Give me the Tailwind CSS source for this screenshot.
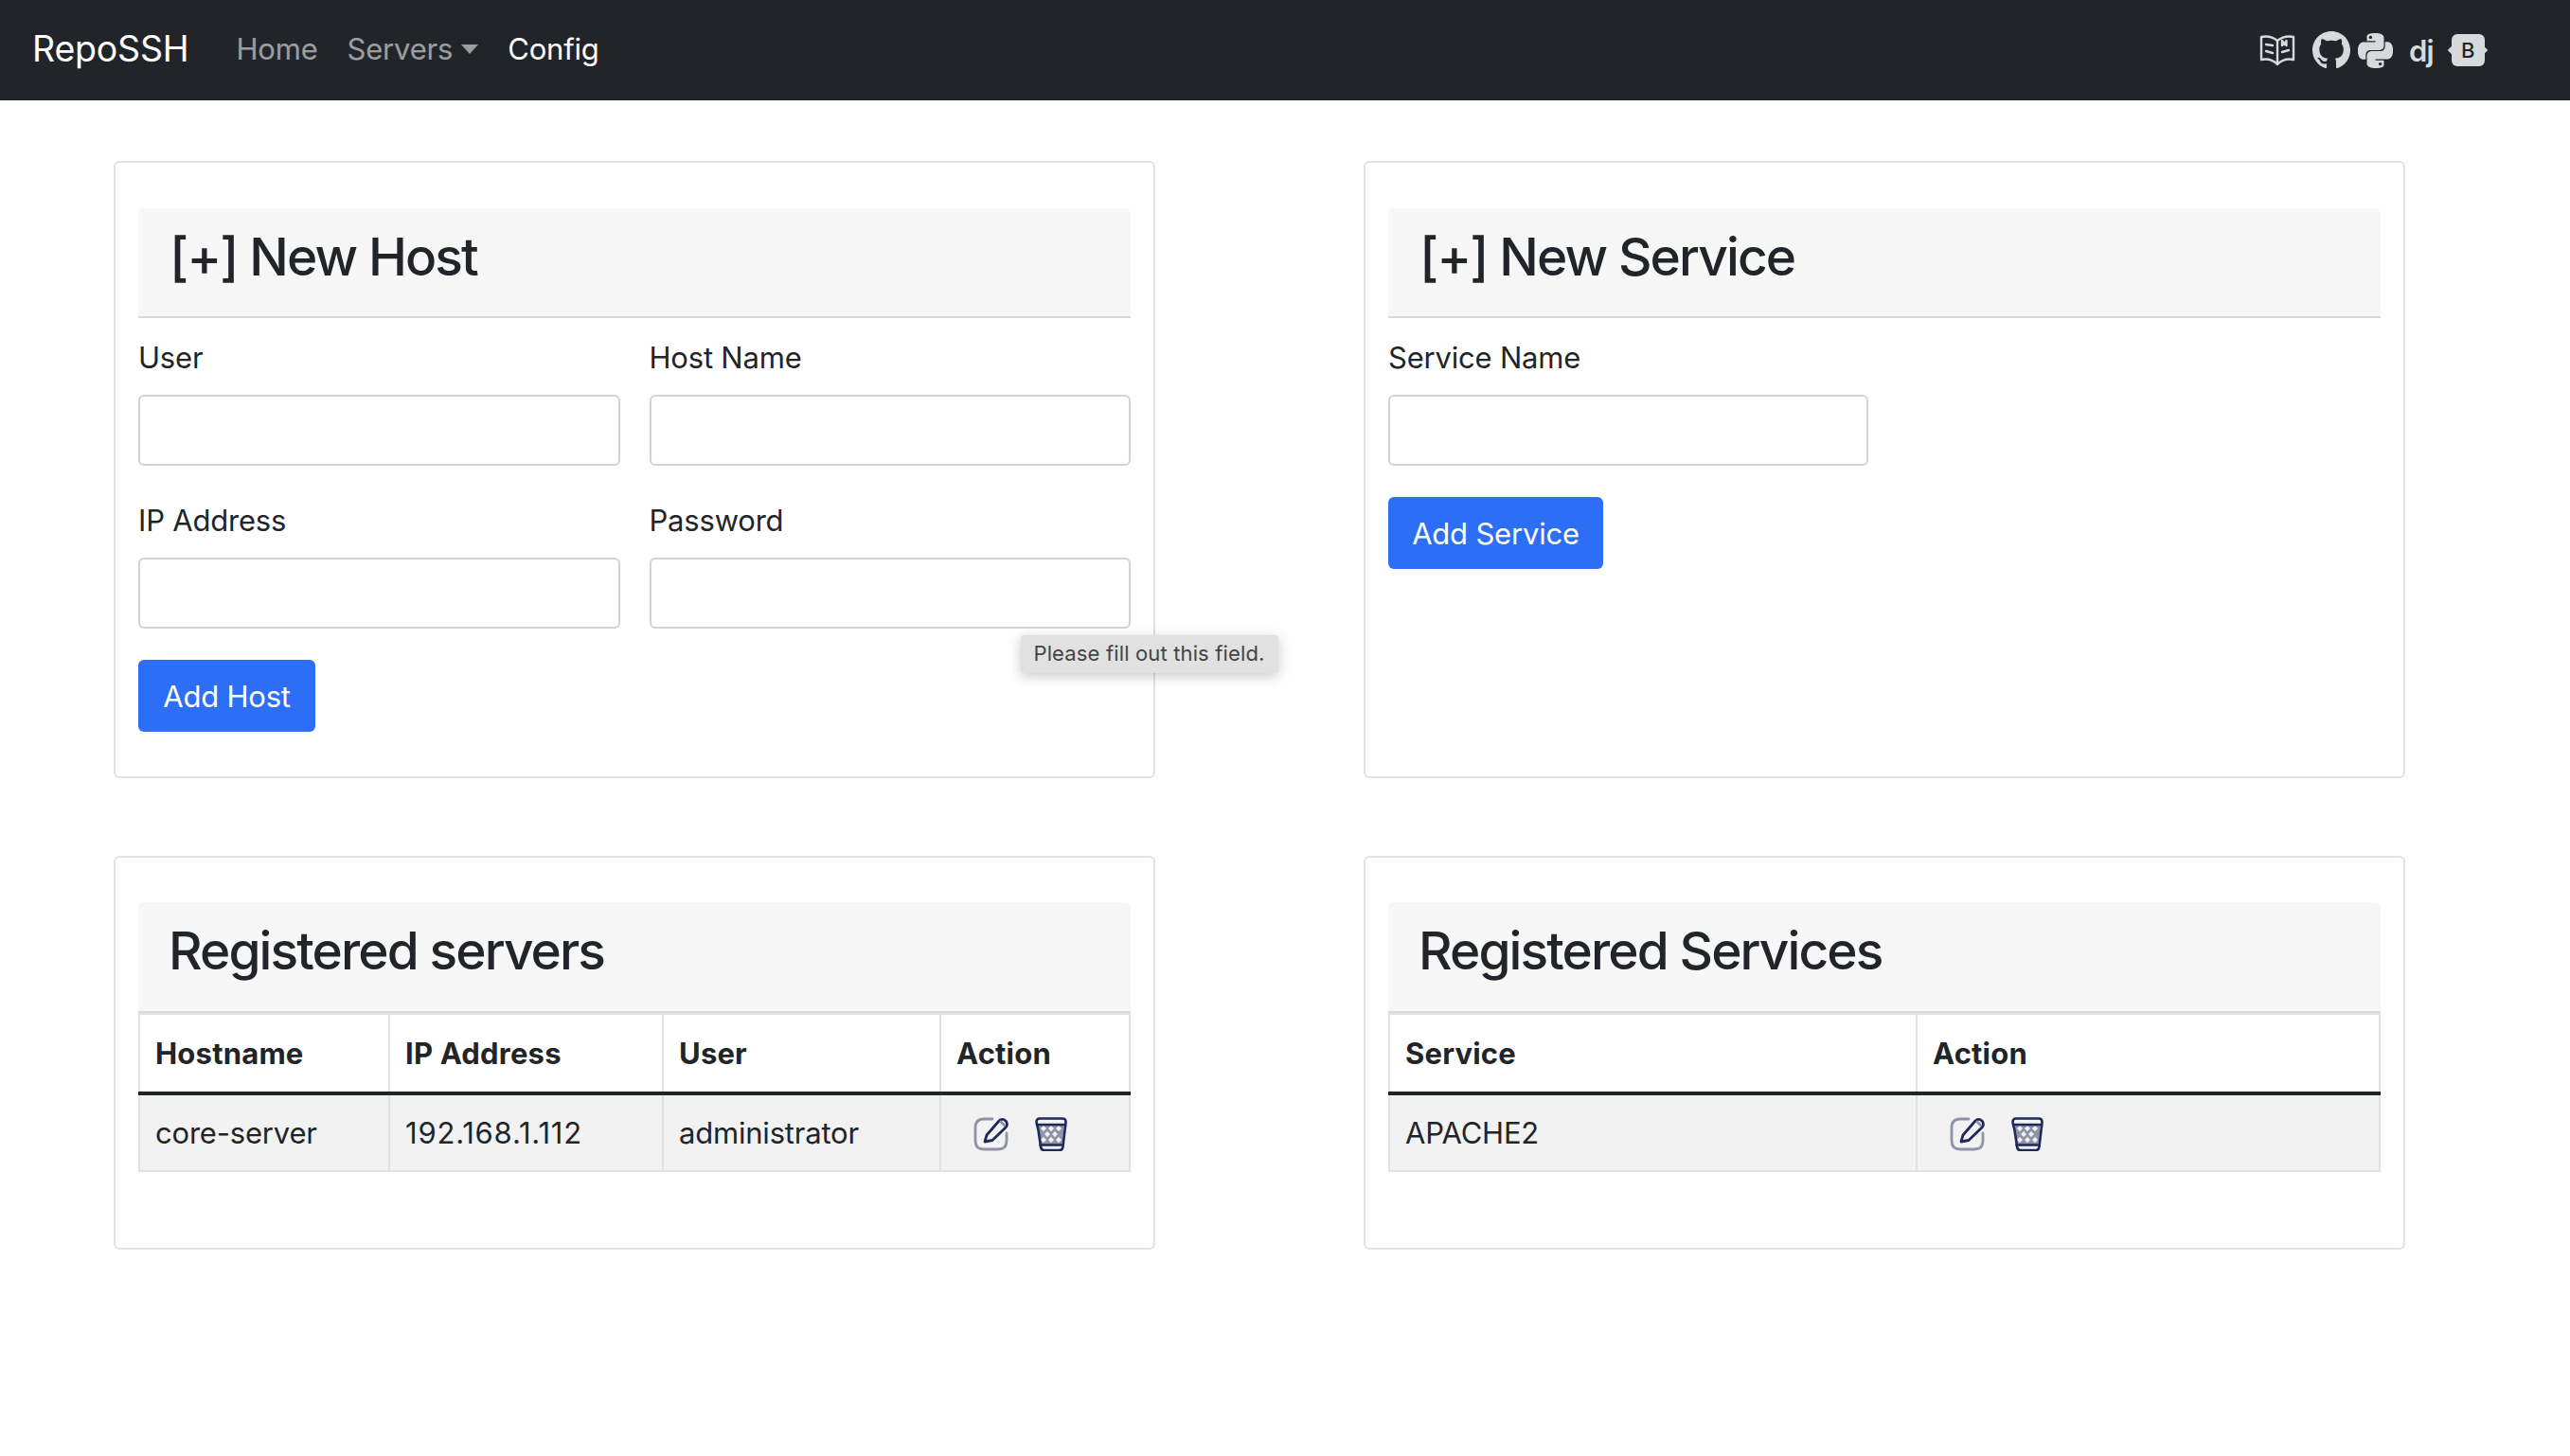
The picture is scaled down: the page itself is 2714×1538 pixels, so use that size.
<!DOCTYPE html>
<html lang="en">
  <head>
    <meta charset="UTF-8" />
    <title>RepoSSH</title>
    <script src="https://cdn.jsdelivr.net/npm/@tailwindcss/browser@4"></script>
  </head>
  <body class="bg-white text-[#212529] font-['Inter',sans-serif] text-[31px] tracking-[-0.2px] leading-[41px] overflow-hidden h-[1538px]">

    <!-- Navbar -->
    <nav class="h-[106px] bg-[#212529] flex items-center pl-[34px] pr-[88px]">
      <a class="text-white text-[37.5px] mr-[50px] -mt-[3px]">RepoSSH</a>
      <a class="text-white/55 mr-[31px] -mt-[4px]">Home</a>
      <a class="text-white/55 mr-[31px] -mt-[4px] flex items-center">Servers<span class="ml-[9px] mt-[2px] border-x-[9px] border-x-transparent border-t-[10px] border-t-white/55"></span></a>
      <a class="text-white -mt-[4px]">Config</a>
      <div class="ml-auto flex items-center text-[#d7dadc]">
        <svg class="w-[38px] h-[34px] -ml-[2px]" viewBox="0 0 38 34" fill="none" stroke="currentColor" stroke-width="2.4" stroke-linejoin="round" stroke-linecap="round">
          <path d="M19 7C14 3 7 2 2 3v24c5-1 12 0 17 5 5-5 12-6 17-5V3c-5-1-12 0-17 4zM19 7v25" />
          <path d="M7 11l7 1M7 18l7 2M24 19l7-2M24 12v-5l2.500 4 2-4 0 5" />
        </svg>
        <svg class="w-[40px] h-[40px] ml-[18px]" viewBox="0 0 16 16" fill="currentColor">
          <path d="M8 0C3.58 0 0 3.58 0 8c0 3.54 2.29 6.53 5.47 7.59.4.07.55-.17.55-.38 0-.19-.01-.82-.01-1.49-2.01.37-2.53-.49-2.69-.94-.09-.23-.48-.94-.82-1.13-.28-.15-.68-.52-.01-.53.63-.01 1.08.58 1.23.82.72 1.21 1.87.87 2.33.66.07-.52.28-.87.51-1.07-1.78-.2-3.64-.89-3.64-3.95 0-.87.31-1.59.82-2.15-.08-.2-.36-1.02.08-2.12 0 0 .67-.21 2.2.82.64-.18 1.32-.27 2-.27.68 0 1.36.09 2 .27 1.53-1.04 2.2-.82 2.2-.82.44 1.1.16 1.92.08 2.12.51.56.82 1.27.82 2.15 0 3.07-1.87 3.75-3.65 3.95.29.25.54.73.54 1.48 0 1.07-.01 1.93-.01 2.2 0 .21.15.46.55.38A8.012 8.012 0 0 0 16 8c0-4.42-3.58-8-8-8z" />
        </svg>
        <svg class="w-[37px] h-[37px] ml-[8px]" viewBox="0 0 24 24" fill="currentColor">
          <path d="M14.25.18l.9.2.73.26.59.3.45.32.34.34.25.34.16.33.1.3.04.26.02.2-.01.13V8.500l-.05.63-.13.55-.21.46-.26.38-.3.31-.33.25-.35.19-.35.14-.33.1-.3.07-.26.04-.21.02H8.770l-.69.05-.59.14-.5.22-.41.27-.33.32-.27.35-.2.36-.15.37-.1.35-.07.32-.04.27-.02.21v3.060H3.170l-.21-.03-.28-.07-.32-.12-.35-.18-.36-.26-.36-.36-.35-.46-.32-.59-.28-.73-.21-.88-.14-1.05-.05-1.23.06-1.22.16-1.04.24-.87.32-.71.36-.57.4-.44.42-.33.42-.24.4-.16.36-.1.32-.05.24-.01h.16l.06.01h8.160v-.83H6.180l-.01-2.75-.02-.37.05-.34.11-.31.17-.28.25-.26.31-.23.38-.2.44-.18.51-.15.58-.12.64-.1.71-.06.77-.04.84-.02 1.27.05zm-6.3 1.98l-.23.33-.08.41.08.41.23.34.33.22.41.09.41-.09.33-.22.23-.34.08-.41-.08-.41-.23-.33-.33-.22-.41-.09-.41.09zm13.09 3.95l.28.06.32.12.35.18.36.27.36.35.35.47.32.59.28.73.21.88.14 1.04.05 1.23-.06 1.23-.16 1.04-.24.86-.32.71-.36.57-.4.45-.42.33-.42.24-.4.16-.36.09-.32.05-.24.02-.16-.01h-8.220v.82h5.840l.01 2.76.02.36-.05.34-.11.31-.17.29-.25.25-.31.24-.38.2-.44.17-.51.15-.58.13-.64.09-.71.07-.77.04-.84.01-1.27-.04-1.07-.14-.9-.2-.73-.25-.59-.3-.45-.33-.34-.34-.25-.34-.16-.33-.1-.3-.04-.25-.02-.2.01-.13v-5.340l.05-.64.13-.54.21-.46.26-.38.3-.32.33-.24.35-.2.35-.14.33-.1.3-.06.26-.04.21-.02.13-.01h5.840l.69-.05.59-.14.5-.21.41-.28.33-.32.27-.35.2-.36.15-.36.1-.35.07-.32.04-.28.02-.21V6.070h2.090l.14.01zm-6.47 14.25l-.23.33-.08.41.08.41.23.33.33.23.41.08.41-.08.33-.23.23-.33.08-.41-.08-.41-.23-.33-.33-.23-.41-.08-.41.08z" />
        </svg>
        <span class="ml-[17px] w-[26px] text-[31px] font-semibold leading-none tracking-tight">dj</span>
        <div class="ml-[16px] relative w-[40px] h-[34px] flex items-center justify-center">
          <span class="absolute left-0 top-[14px] w-[6px] h-[6px] bg-[#d7dadc] rotate-45"></span>
          <span class="absolute right-0 top-[14px] w-[6px] h-[6px] bg-[#d7dadc] rotate-45"></span>
          <span class="relative w-[35px] h-[34px] rounded-[6px] bg-[#d7dadc] text-[#212529] text-[22px] font-medium leading-none flex items-center justify-center">B</span>
        </div>
      </div>
    </nav>

    <!-- Cards -->
    <main class="grid grid-cols-[1100px_1100px] gap-x-[220px] gap-y-[82px] pl-[120px] pt-[64px]">

      <section class="h-[652px] border-2 border-[#dfe2e6] rounded-[6px] px-[24px] pt-[48px]">
        <h2 class="h-[116px] bg-[#f7f7f7] border-b-2 border-[#d9d9d9] rounded-t-[6px] pl-[33px] text-[55px] font-medium leading-[102px] tracking-[-1.9px]">[+] New Host</h2>
        <div class="grid grid-cols-2 gap-x-[31px] gap-y-[33px] mt-[21px]">
          <div>
            <label class="block h-[60px]">User</label>
            <input class="block w-full h-[75px] bg-white border-2 border-[#ced4da] rounded-[6px]" />
          </div>
          <div>
            <label class="block h-[60px]">Host Name</label>
            <input class="block w-full h-[75px] bg-white border-2 border-[#ced4da] rounded-[6px]" />
          </div>
          <div>
            <label class="block h-[64px] pt-[4px]">IP Address</label>
            <input class="block w-full h-[75px] bg-white border-2 border-[#ced4da] rounded-[6px]" />
          </div>
          <div class="relative">
            <label class="block h-[64px] pt-[4px]">Password</label>
            <input class="block w-full h-[75px] bg-white border-2 border-[#ced4da] rounded-[6px]" />
            <div class="absolute left-[392px] top-[146px] z-10 w-[272px] h-[40px] bg-[#e1e1e1] rounded-[3px] text-[#444] text-[22px] tracking-[0.15px] leading-[38px] text-center whitespace-nowrap shadow-[0_3px_14px_rgba(0,0,0,0.22)]">Please fill out this field.</div>
          </div>
        </div>
        <button class="block mt-[33px] w-[187px] h-[76px] bg-[#2c6ef6] text-white rounded-[6px]">Add Host</button>
      </section>

      <section class="h-[652px] border-2 border-[#dfe2e6] rounded-[6px] px-[24px] pt-[48px]">
        <h2 class="h-[116px] bg-[#f7f7f7] border-b-2 border-[#d9d9d9] rounded-t-[6px] pl-[33px] text-[55px] font-medium leading-[102px] tracking-[-1.9px]">[+] New Service</h2>
        <div class="mt-[21px] w-[507px]">
          <label class="block h-[60px]">Service Name</label>
          <input class="block w-full h-[75px] bg-white border-2 border-[#ced4da] rounded-[6px]" />
        </div>
        <button class="block mt-[33px] w-[227px] h-[76px] bg-[#2c6ef6] text-white rounded-[6px]">Add Service</button>
      </section>

      <section class="h-[416px] border-2 border-[#dfe2e6] rounded-[6px] px-[24px] pt-[47px]">
        <h2 class="h-[117px] bg-[#f7f7f7] border-b-2 border-[#d9d9d9] rounded-t-[6px] pl-[32px] text-[55px] font-medium leading-[102px] tracking-[-1.9px]">Registered servers</h2>
        <table class="w-full table-fixed border-collapse">
          <thead>
            <tr class="h-[84px] text-left">
              <th class="w-[264px] pl-[16px] border-2 border-[#dee2e6] border-b-[4px] border-b-[#212529] font-bold tracking-[0.2px]">Hostname</th>
              <th class="w-[289px] pl-[16px] border-2 border-[#dee2e6] border-b-[4px] border-b-[#212529] font-bold tracking-[0.2px]">IP Address</th>
              <th class="w-[293px] pl-[16px] border-2 border-[#dee2e6] border-b-[4px] border-b-[#212529] font-bold tracking-[0.2px]">User</th>
              <th class="pl-[16px] border-2 border-[#dee2e6] border-b-[4px] border-b-[#212529] font-bold tracking-[0.2px]">Action</th>
            </tr>
          </thead>
          <tbody>
            <tr class="h-[82px] bg-[#f2f2f2]">
              <td class="pl-[16px] border-2 border-t-0 border-[#dee2e6]">core-server</td>
              <td class="pl-[16px] border-2 border-t-0 border-[#dee2e6] tracking-[0.8px]">192.168.1.112</td>
              <td class="pl-[16px] border-2 border-t-0 border-[#dee2e6]">administrator</td>
              <td class="pl-[34px] border-2 border-t-0 border-[#dee2e6]">
                <div class="flex items-center gap-[28px] pt-[3px]">
                  <svg class="w-[37px] h-[36px]" viewBox="0 0 37 36" fill="none" stroke-linecap="round" stroke-linejoin="round">
                    <path d="M20 2H11C5 2 2 5 2 11v14c0 6 3 9 9 9h15c6 0 9-3 9-9V17" stroke="#8e93a8" stroke-width="2.800" />
                    <path d="M12 26l2-7L27 4c2-2 5-2 7 0s2 5 0 7L20 24.500z" stroke="#1e2a5a" stroke-width="2.800" />
                    <path d="M29 5l3.500 3.500" stroke="#8e93a8" stroke-width="2.800" />
                  </svg>
                  <svg class="w-[34px] h-[36px]" viewBox="0 0 34 36" fill="none" stroke-linecap="round" stroke-linejoin="round">
                    <path d="M3 8h28l-2.500 21h-23z" fill="#8f93a6" />
                    <path d="M9 9l3 3-3 3-3-3zM17 9l3 3-3 3-3-3zM25 9l3 3-3 3-3-3zM13 15l3 3-3 3-3-3zM21 15l3 3-3 3-3-3zM9 21l3 3-3 3-3-3zM17 21l3 3-3 3-3-3zM25 21l3 3-3 3-3-3z" fill="#f2f2f2" />
                    <path d="M5 1.500h24c2.500 0 3.500 1.500 3.500 3.500 0 2-.5 6-1 9l-2 17c-.3 3-2 4-4 4H10c-2 0-3.700-1-4-4L3.500 14c-.5-3-2-7-2-9s1-3.500 3.500-3.500z" stroke="#1e2a5a" stroke-width="2.600" />
                    <path d="M2.500 8h29M5.500 29.500h23" stroke="#1e2a5a" stroke-width="2.600" />
                  </svg>
                </div>
              </td>
            </tr>
          </tbody>
        </table>
      </section>

      <section class="h-[416px] border-2 border-[#dfe2e6] rounded-[6px] px-[24px] pt-[47px]">
        <h2 class="h-[117px] bg-[#f7f7f7] border-b-2 border-[#d9d9d9] rounded-t-[6px] pl-[32px] text-[55px] font-medium leading-[102px] tracking-[-1.9px]">Registered Services</h2>
        <table class="w-full table-fixed border-collapse">
          <thead>
            <tr class="h-[84px] text-left">
              <th class="w-[557px] pl-[16px] border-2 border-[#dee2e6] border-b-[4px] border-b-[#212529] font-bold tracking-[0.2px]">Service</th>
              <th class="pl-[16px] border-2 border-[#dee2e6] border-b-[4px] border-b-[#212529] font-bold tracking-[0.2px]">Action</th>
            </tr>
          </thead>
          <tbody>
            <tr class="h-[82px] bg-[#f2f2f2]">
              <td class="pl-[16px] border-2 border-t-0 border-[#dee2e6]">APACHE2</td>
              <td class="pl-[34px] border-2 border-t-0 border-[#dee2e6]">
                <div class="flex items-center gap-[28px] pt-[3px]">
                  <svg class="w-[37px] h-[36px]" viewBox="0 0 37 36" fill="none" stroke-linecap="round" stroke-linejoin="round">
                    <path d="M20 2H11C5 2 2 5 2 11v14c0 6 3 9 9 9h15c6 0 9-3 9-9V17" stroke="#8e93a8" stroke-width="2.800" />
                    <path d="M12 26l2-7L27 4c2-2 5-2 7 0s2 5 0 7L20 24.500z" stroke="#1e2a5a" stroke-width="2.800" />
                    <path d="M29 5l3.500 3.500" stroke="#8e93a8" stroke-width="2.800" />
                  </svg>
                  <svg class="w-[34px] h-[36px]" viewBox="0 0 34 36" fill="none" stroke-linecap="round" stroke-linejoin="round">
                    <path d="M3 8h28l-2.500 21h-23z" fill="#8f93a6" />
                    <path d="M9 9l3 3-3 3-3-3zM17 9l3 3-3 3-3-3zM25 9l3 3-3 3-3-3zM13 15l3 3-3 3-3-3zM21 15l3 3-3 3-3-3zM9 21l3 3-3 3-3-3zM17 21l3 3-3 3-3-3zM25 21l3 3-3 3-3-3z" fill="#f2f2f2" />
                    <path d="M5 1.500h24c2.500 0 3.500 1.500 3.500 3.500 0 2-.5 6-1 9l-2 17c-.3 3-2 4-4 4H10c-2 0-3.700-1-4-4L3.500 14c-.5-3-2-7-2-9s1-3.500 3.500-3.500z" stroke="#1e2a5a" stroke-width="2.600" />
                    <path d="M2.500 8h29M5.500 29.500h23" stroke="#1e2a5a" stroke-width="2.600" />
                  </svg>
                </div>
              </td>
            </tr>
          </tbody>
        </table>
      </section>
    </main>
  </body>
</html>
